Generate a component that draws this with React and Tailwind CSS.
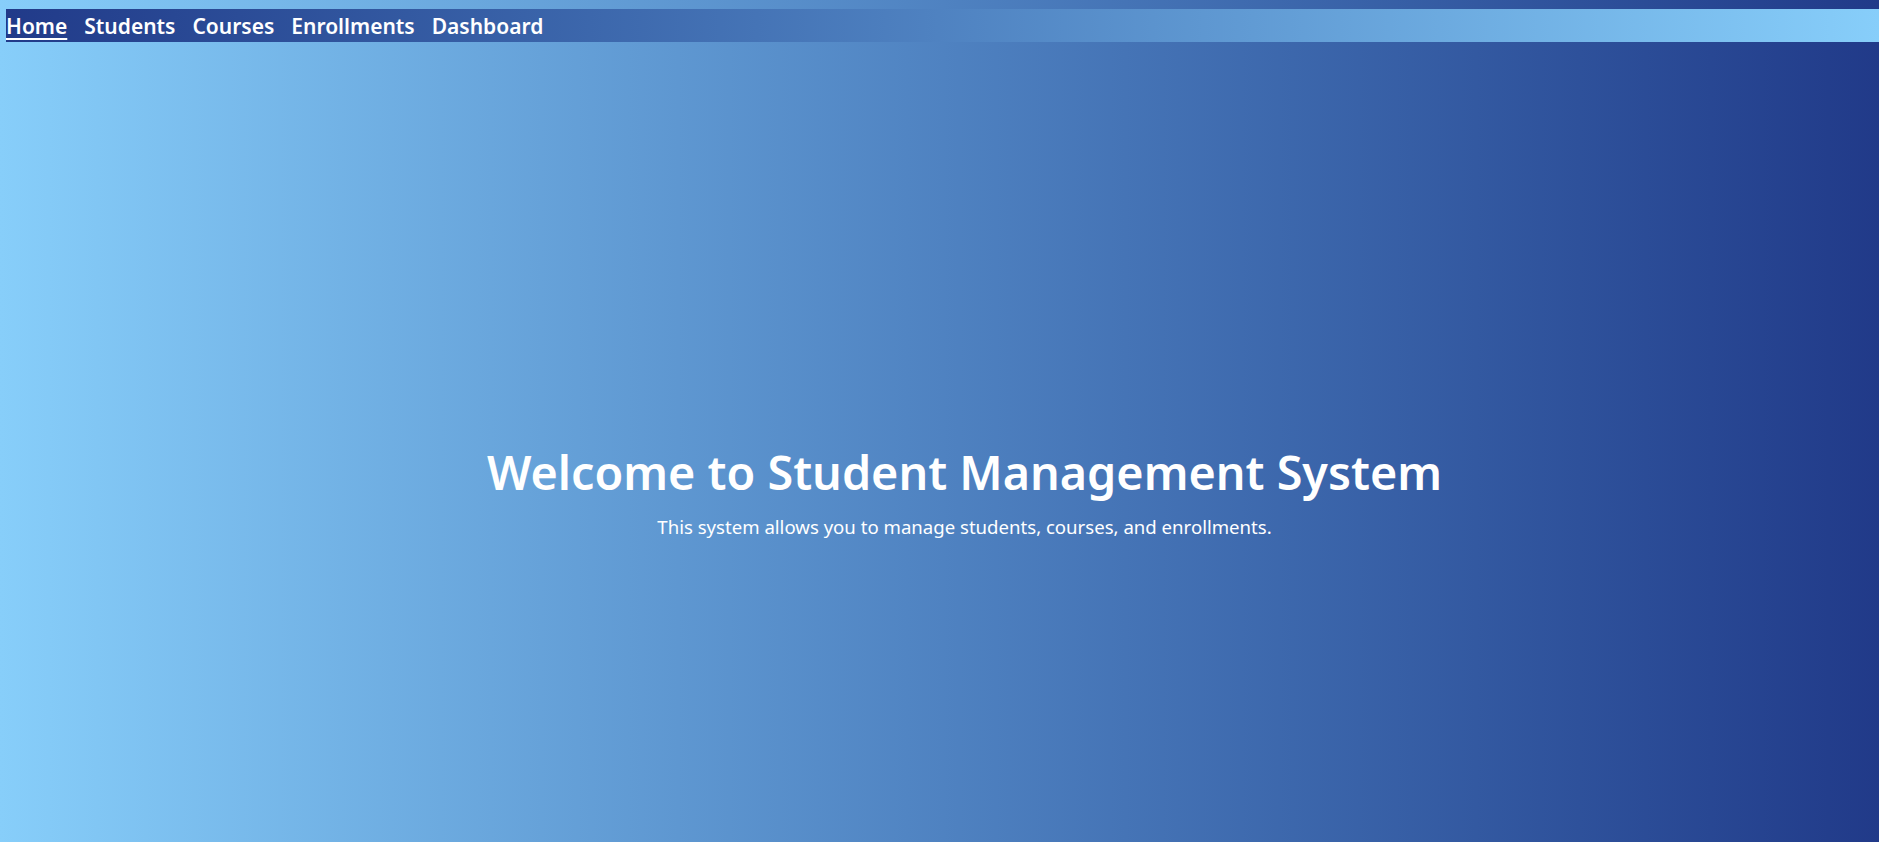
const links = ["Home", "Students", "Courses", "Enrollments", "Dashboard"]

export default function App() {
  return (
    <div
      className="min-h-screen w-full bg-gradient-to-r from-[#87cefa] to-[#213a89] text-white"
      style={{ fontFamily: '"Noto Sans", "Open Sans", sans-serif' }}
    >
      <div className="pt-[9px] pl-[6px]">
        <nav className="flex h-[33px] items-center gap-[17px] bg-gradient-to-r from-[#213a89] to-[#87cefa]">
          {links.map((l, i) => (
            <a
              key={l}
              className={`pt-[2px] text-[21px] font-semibold leading-none ${i === 0 ? "underline underline-offset-[4px] decoration-2" : ""}`}
            >
              {l}
            </a>
          ))}
        </nav>
      </div>

      <main className="flex flex-col items-center pl-[50px] pt-[401px]">
        <h1 className="text-[46.7px] font-semibold leading-tight">Welcome to Student Management System</h1>
        <p className="mt-[12px] text-[18.6px]">This system allows you to manage students, courses, and enrollments.</p>
      </main>
    </div>
  )
}
